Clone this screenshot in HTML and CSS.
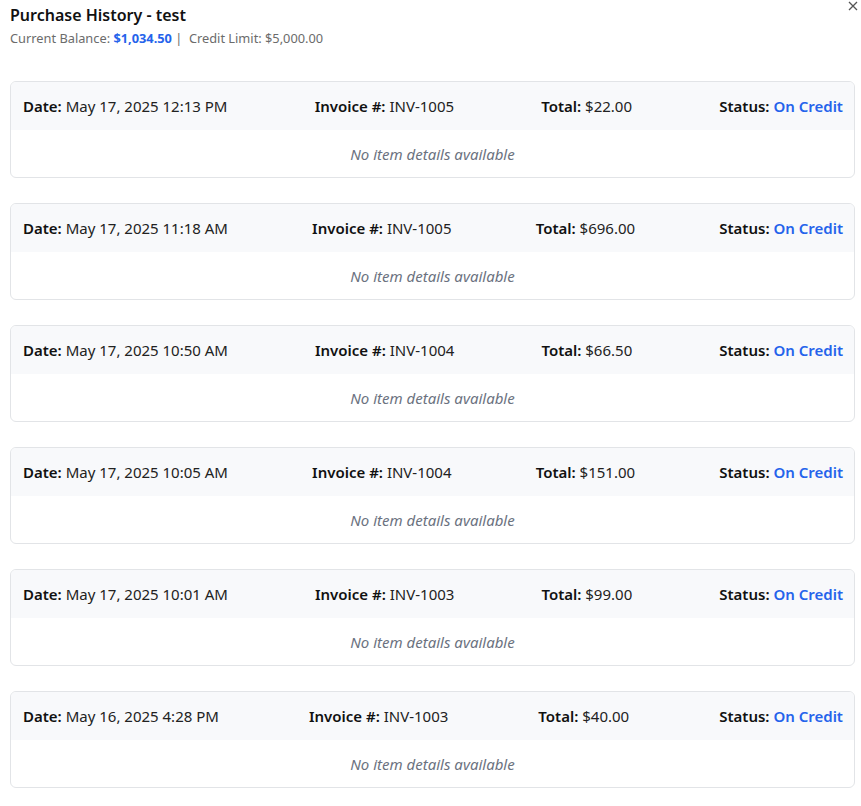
FILE: index.html
```html
<!DOCTYPE html>
<html>
<head>
<meta charset="utf-8">
<link rel="stylesheet" href="styles.css">
</head>
<body>
<div class="modal">
  <button class="close" aria-label="Close"><svg width="10" height="10" viewBox="0 0 10 10"><path d="M1 1L9 9M9 1L1 9" stroke="#555" stroke-width="1.3" fill="none"/></svg></button>
  <h1 class="title">Purchase History - test</h1>
  <div class="summary">Current Balance: <span class="balance">$1,034.50</span> | &nbsp;Credit Limit: $5,000.00</div>
  <div class="list">
    <div class="card">
      <div class="card-head">
        <span><b>Date:</b> May 17, 2025 12:13 PM</span>
        <span><b>Invoice #:</b> INV-1005</span>
        <span><b>Total:</b> $22.00</span>
        <span><b>Status:</b> <span class="status">On Credit</span></span>
      </div>
      <div class="card-body">No item details available</div>
    </div>
    <div class="card">
      <div class="card-head">
        <span><b>Date:</b> May 17, 2025 11:18 AM</span>
        <span><b>Invoice #:</b> INV-1005</span>
        <span><b>Total:</b> $696.00</span>
        <span><b>Status:</b> <span class="status">On Credit</span></span>
      </div>
      <div class="card-body">No item details available</div>
    </div>
    <div class="card">
      <div class="card-head">
        <span><b>Date:</b> May 17, 2025 10:50 AM</span>
        <span><b>Invoice #:</b> INV-1004</span>
        <span><b>Total:</b> $66.50</span>
        <span><b>Status:</b> <span class="status">On Credit</span></span>
      </div>
      <div class="card-body">No item details available</div>
    </div>
    <div class="card">
      <div class="card-head">
        <span><b>Date:</b> May 17, 2025 10:05 AM</span>
        <span><b>Invoice #:</b> INV-1004</span>
        <span><b>Total:</b> $151.00</span>
        <span><b>Status:</b> <span class="status">On Credit</span></span>
      </div>
      <div class="card-body">No item details available</div>
    </div>
    <div class="card">
      <div class="card-head">
        <span><b>Date:</b> May 17, 2025 10:01 AM</span>
        <span><b>Invoice #:</b> INV-1003</span>
        <span><b>Total:</b> $99.00</span>
        <span><b>Status:</b> <span class="status">On Credit</span></span>
      </div>
      <div class="card-body">No item details available</div>
    </div>
    <div class="card">
      <div class="card-head">
        <span><b>Date:</b> May 16, 2025 4:28 PM</span>
        <span><b>Invoice #:</b> INV-1003</span>
        <span><b>Total:</b> $40.00</span>
        <span><b>Status:</b> <span class="status">On Credit</span></span>
      </div>
      <div class="card-body">No item details available</div>
    </div>
  </div>
</div>
</body>
</html>
```

FILE: styles.css
```css
* { box-sizing: border-box; }
html, body { margin: 0; padding: 0; background: #fff; }
body {
  font-family: "Noto Sans", "Open Sans", sans-serif;
  color: #111;
}
.modal {
  position: relative;
  padding: 3px 6px 0 10px;
}
.close {
  position: absolute;
  top: 0;
  right: 2px;
  width: 12px;
  height: 12px;
  border: none;
  background: none;
  padding: 0;
  display: flex;
  align-items: center;
  justify-content: center;
}
.title {
  margin: 0;
  font-size: 16px;
  font-weight: 600;
  line-height: 24px;
  color: #111;
}
.summary {
  margin-top: 2px;
  font-size: 12.8px;
  line-height: 18px;
  color: #6b6b6b;
}
.balance { color: #2563eb; font-weight: 700; }
.list {
  margin-top: 34px;
  display: flex;
  flex-direction: column;
  gap: 25px;
}
.card {
  border: 1px solid #e2e4e7;
  border-radius: 6px;
  overflow: hidden;
}
.card-head {
  display: flex;
  justify-content: space-between;
  align-items: center;
  height: 48px;
  padding: 0 11px 0 12px;
  background: #f8f9fb;
  font-size: 15px;
  color: #222;
}
.card-head b { font-weight: 600; color: #111; }
.status { color: #2563eb; font-weight: 600; }
.card-body {
  height: 47px;
  display: flex;
  align-items: center;
  justify-content: center;
  font-style: italic;
  font-size: 15px;
  color: #6b7280;
}
```
